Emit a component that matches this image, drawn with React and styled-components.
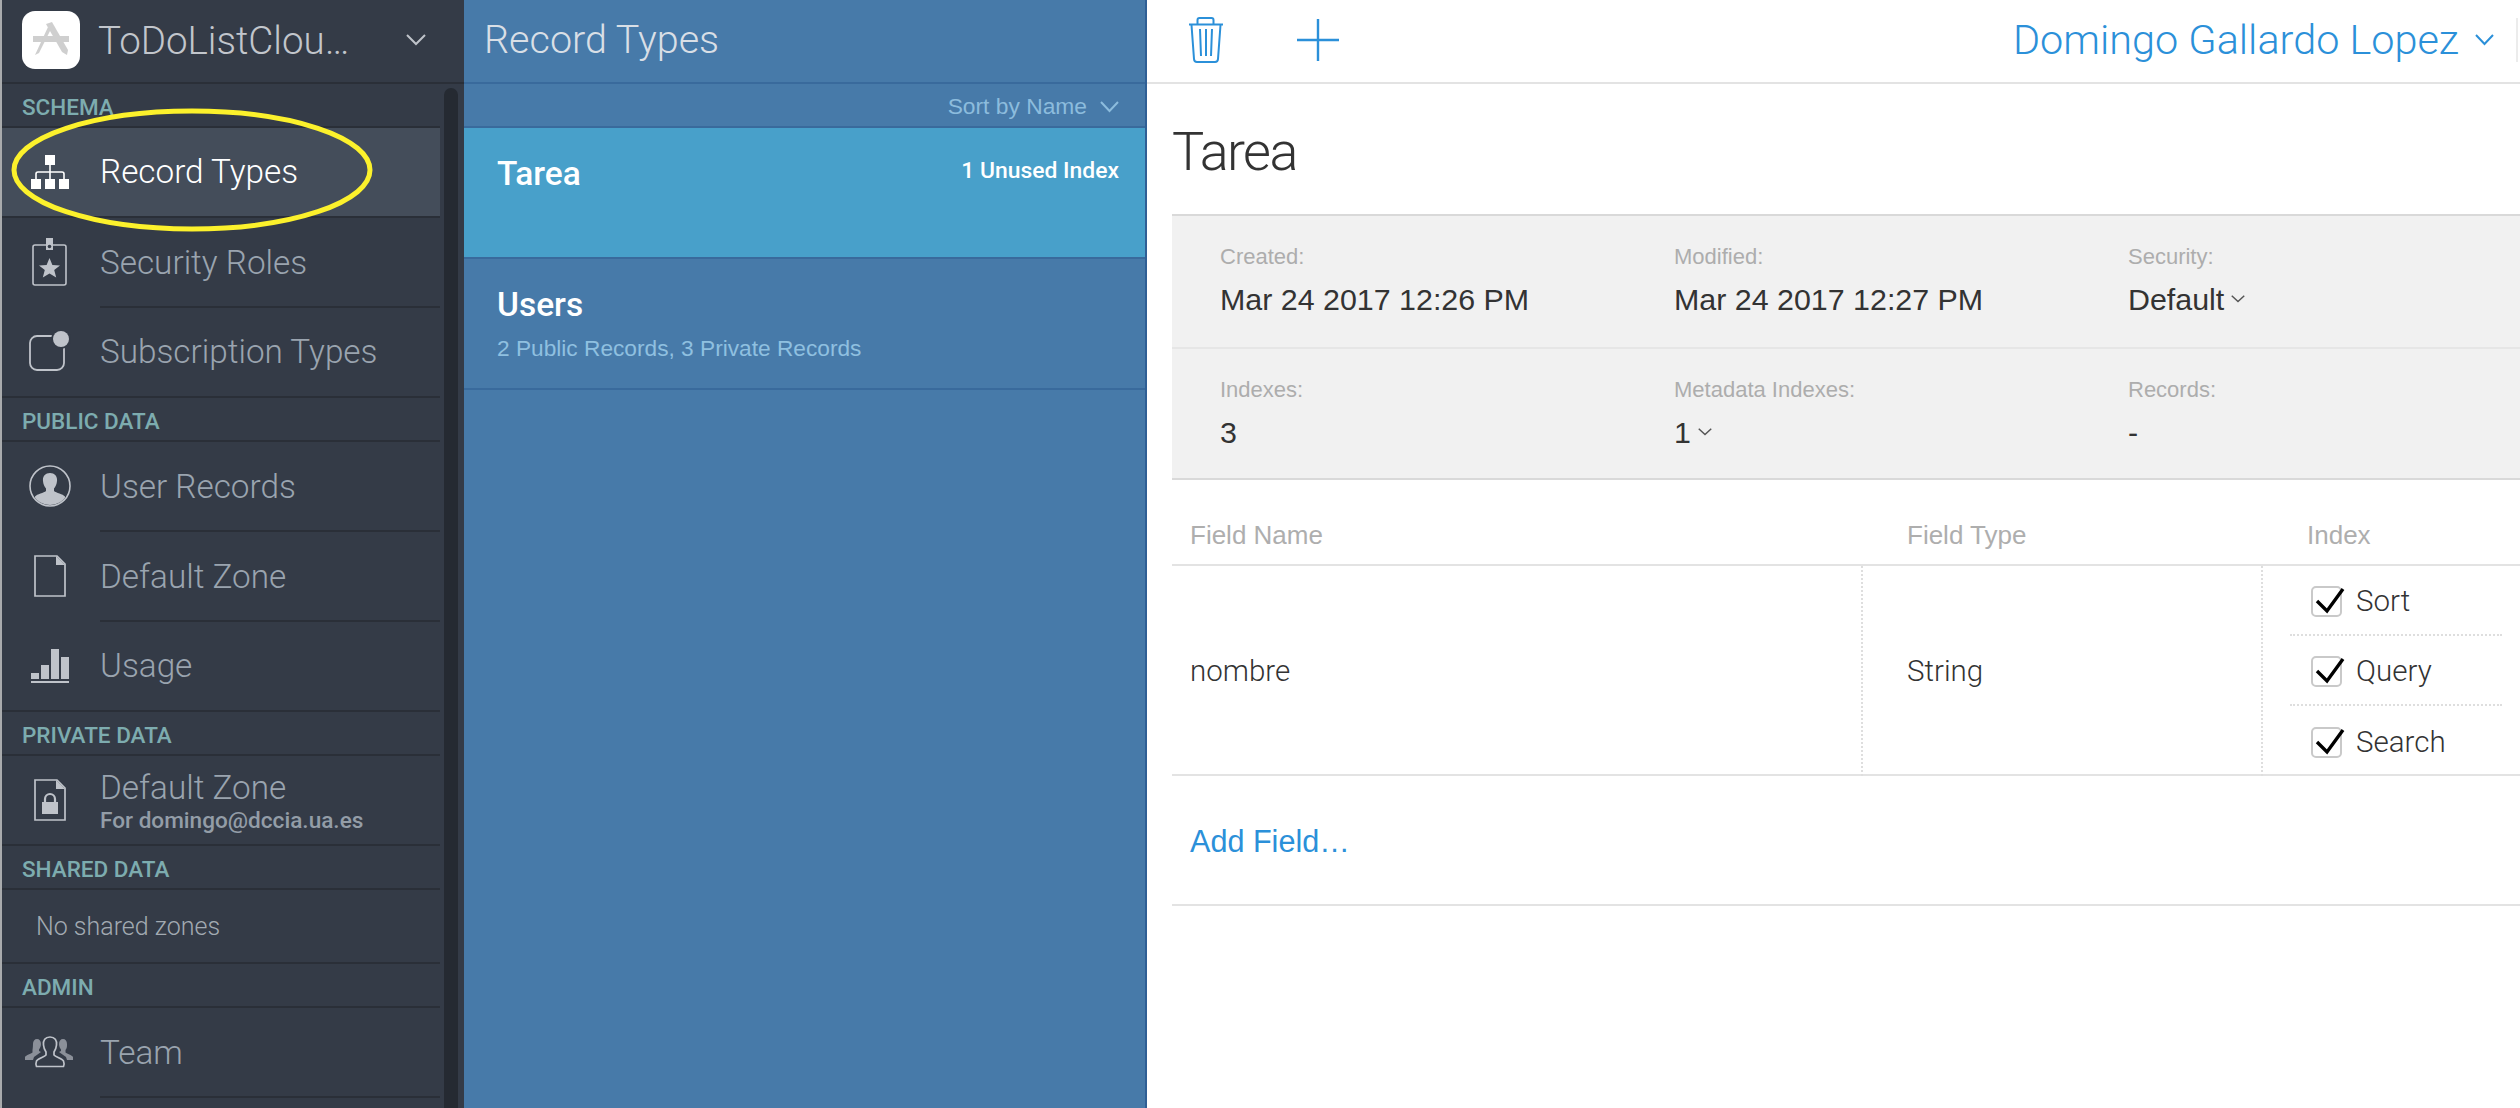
import React from "react";
import styled, { createGlobalStyle } from "styled-components";

const LIGHT = `Roboto, "Liberation Sans", sans-serif`;
const SANS = `"Liberation Sans", Arial, sans-serif`;

const GlobalStyle = createGlobalStyle`
  html, body {
    margin: 0;
    padding: 0;
    background: #fff;
    overflow: hidden;
  }
  * {
    box-sizing: border-box;
  }
`;

const Page = styled.div`
  display: flex;
  width: 2520px;
  height: 1108px;
  overflow: hidden;
  border-left: 2px solid #a9abad;
  font-family: ${SANS};
`;

/* ---------- left sidebar ---------- */

const Sidebar = styled.aside`
  position: relative;
  flex: 0 0 462px;
  display: flex;
  flex-direction: column;
  background: #343b47;
`;

const AppHeader = styled.header`
  flex: 0 0 84px;
  display: flex;
  align-items: center;
  padding: 0 38px 2px 20px;
  border-bottom: 2px solid #2a2f38;
`;

const AppIcon = styled.div`
  flex: 0 0 58px;
  height: 58px;
  margin-right: 18px;
  border-radius: 13px;
  background: #fff;
  svg {
    display: block;
  }
`;

const AppName = styled.div`
  flex: 1;
  font: 300 38.5px ${LIGHT};
  color: #c2c6cc;
  white-space: nowrap;
`;

const SideBody = styled.div`
  flex: 1;
  display: flex;
  min-height: 0;
  padding-right: 6px;
`;

const Nav = styled.nav`
  flex: 0 0 438px;
`;

const Track = styled.div`
  flex: 0 0 14px;
  margin: 4px 0 0 4px;
  border-radius: 7px 7px 0 0;
  background: #252a32;
`;

const SectionLabel = styled.div`
  height: 44px;
  padding: 10px 0 0 20px;
  border-bottom: 2px solid #2a2f38;
  font: 500 22.5px/26px ${LIGHT};
  color: #7dacaf;
`;

const Row = styled.div`
  display: flex;
  height: 90px;
  background: ${(p) => (p.$active ? "#444d5a" : "transparent")};
  border-bottom: 2px solid ${(p) => (p.$last ? "#2a2f38" : "transparent")};
`;

const IconSlot = styled.div`
  flex: 0 0 98px;
  display: flex;
  align-items: center;
  justify-content: center;
  padding-right: 2px;
  svg {
    display: block;
  }
`;

const RowText = styled.div`
  flex: 1;
  display: flex;
  flex-direction: column;
  justify-content: center;
  padding-top: 2px;
  margin-bottom: ${(p) => (p.$last ? "0" : "-2px")};
  border-bottom: 2px solid ${(p) => (p.$last ? "transparent" : "#2a2f38")};
`;

const RowTitle = styled.div`
  font: 300 33.3px/40px ${LIGHT};
  color: ${(p) => (p.$active ? "#fff" : "#9aa4af")};
`;

const RowSub = styled.div`
  font: 500 22.6px/24px ${LIGHT};
  color: #939da7;
  margin-top: 1px;
`;

const EmptyRow = styled.div`
  height: 74px;
  display: flex;
  align-items: center;
  padding: 0 0 0 34px;
  border-bottom: 2px solid #2a2f38;
  font: 300 25px ${LIGHT};
  color: #a2aab2;
`;

const Highlight = styled.svg`
  position: absolute;
  left: 7px;
  top: 106px;
  pointer-events: none;
`;

/* ---------- record types list ---------- */

const ListPanel = styled.section`
  flex: 0 0 683px;
  display: flex;
  flex-direction: column;
  background: #477aa9;
  border-right: 2px solid #2f5f95;
`;

const PanelHeader = styled.header`
  flex: 0 0 84px;
  display: flex;
  align-items: center;
  padding: 0 0 4px 20px;
  border-bottom: 2px solid #396a9c;
  font: 300 39.5px ${LIGHT};
  color: #d9dfe6;
`;

const SortBar = styled.div`
  flex: 0 0 44px;
  display: flex;
  align-items: center;
  justify-content: flex-end;
  gap: 13px;
  padding: 3px 26px 0 0;
  border-bottom: 2px solid #396a9c;
  font-size: 22.8px;
  color: #8cbcdd;
`;

const Item = styled.div`
  position: relative;
  height: 131px;
  padding: 29px 26px 0 33px;
  background: ${(p) => (p.$active ? "#48a0ca" : "transparent")};
  border-bottom: 2px solid #396a9c;
`;

const ItemHead = styled.div`
  display: flex;
  align-items: flex-start;
  justify-content: space-between;
`;

const ItemName = styled.div`
  font: 500 33.5px/34px ${LIGHT};
  color: #fff;
`;

const ItemNote = styled.div`
  font: 500 22.9px/28px ${LIGHT};
  color: #fff;
`;

const ItemSub = styled.div`
  margin-top: 13px;
  font-size: 22.7px;
  line-height: 26px;
  color: #8fc0e0;
`;

/* ---------- detail ---------- */

const Detail = styled.main`
  flex: 1;
  min-width: 0;
  display: flex;
  flex-direction: column;
  background: #fff;
`;

const TopBar = styled.header`
  flex: 0 0 84px;
  display: flex;
  align-items: center;
  padding: 0 2px 2px 42px;
  border-bottom: 2px solid #e3e3e3;
  svg {
    display: block;
  }
`;

const TopActions = styled.div`
  flex: 1;
  display: flex;
  align-items: center;
  gap: 74px;
`;

const UserMenu = styled.div`
  display: flex;
  align-items: center;
  gap: 16px;
  font: 300 41.4px ${LIGHT};
  color: #2b90d9;
`;

const TopDivider = styled.div`
  width: 2px;
  height: 44px;
  margin-left: 22px;
  background: #ececec;
`;

const Body = styled.div`
  padding-left: 25px;
`;

const Title = styled.h1`
  margin: 0;
  height: 130px;
  padding-top: 36px;
  font: 300 54px/64px ${LIGHT};
  letter-spacing: -1.6px;
  color: #333;
`;

const InfoPanel = styled.div`
  background: #f1f1f1;
  border-top: 2px solid #d9d9d9;
  border-bottom: 2px solid #d9d9d9;
`;

const InfoRow = styled.div`
  display: grid;
  grid-template-columns: 454px 454px 1fr;
  height: 131px;
  padding: 26px 0 0 48px;
  border-top: ${(p) => (p.$second ? "2px solid #e6e6e6" : "0")};
`;

const InfoLabel = styled.div`
  font-size: 22px;
  line-height: 30px;
  color: #adadad;
`;

const InfoValue = styled.div`
  display: flex;
  align-items: center;
  gap: 7px;
  margin-top: 10px;
  font-size: 30.4px;
  line-height: 34px;
  color: #333;
`;

const Table = styled.div`
  margin-top: 36px;
`;

const FieldGrid = styled.div`
  display: grid;
  grid-template-columns: 691px 400px 1fr;
`;

const HeadRow = styled(FieldGrid)`
  height: 50px;
  border-bottom: 2px solid #e3e3e3;
`;

const HeadCell = styled.div`
  padding: 3px 0 0 ${(p) => p.$pad || 18}px;
  font-size: 26px;
  line-height: 32px;
  color: #aeaeae;
`;

const BodyRow = styled(FieldGrid)`
  height: 210px;
  border-bottom: 2px solid #e3e3e3;
`;

const Cell = styled.div`
  display: flex;
  align-items: center;
  padding: 0 0 0 ${(p) => p.$pad || 18}px;
  font: 300 29.5px ${LIGHT};
  color: #333;
  border-right: ${(p) => (p.$divider ? "2px dotted #dedede" : "0")};
`;

const IndexList = styled.div`
  display: flex;
  flex-direction: column;
  padding: 0 18px 0 27px;
`;

const IndexOption = styled.label`
  display: flex;
  align-items: center;
  height: 70px;
  padding: 2px 0 0 21px;
  gap: 14px;
  font: 300 29.5px ${LIGHT};
  color: #333;
  border-bottom: ${(p) => (p.$last ? "0" : "2px dotted #dedede")};
`;

const CheckBox = styled.span`
  position: relative;
  flex: 0 0 31px;
  height: 31px;
  border: 2px solid #c9c9c9;
  border-radius: 5px;
  svg {
    position: absolute;
    left: 3px;
    top: 0;
    overflow: visible;
  }
`;

const FooterRow = styled.div`
  height: 130px;
  display: flex;
  align-items: center;
  padding: 2px 0 0 18px;
  border-bottom: 2px solid #e3e3e3;
  font-size: 30.6px;
  color: #2b90d9;
`;

/* ---------- drawings ---------- */

const Chevron = ({ w, h, color, sw = 2 }) => (
  <svg width={w} height={h} viewBox={`0 0 ${w} ${h}`} style={{ flex: "none" }}>
    <polyline
      points={`${sw / 2},${sw / 2} ${w / 2},${h - sw} ${w - sw / 2},${sw / 2}`}
      fill="none"
      stroke={color}
      strokeWidth={sw}
    />
  </svg>
);

const AppGlyph = () => (
  <svg width="58" height="58" viewBox="0 0 58 58">
    <g fill="#cfcfcf">
      <rect x="11" y="25" width="36" height="6" />
      <polygon points="26,16 29,18 17,42 13,44" />
      <polygon points="24,13 30,11 46,39 45,44 40,41" />
    </g>
  </svg>
);

const HierarchyIcon = () => (
  <svg width="38" height="34" viewBox="0 0 38 34" fill="#fff">
    <rect x="14" y="0" width="10" height="10" />
    <rect x="0" y="24" width="10" height="10" />
    <rect x="14" y="24" width="10" height="10" />
    <rect x="28" y="24" width="10" height="10" />
    <path d="M19 10v14M5 24v-5q0-2 2-2h24q2 0 2 2v5" fill="none" stroke="#fff" strokeWidth="1.6" />
  </svg>
);

const BadgeIcon = () => (
  <svg width="36" height="48" viewBox="0 0 36 48" fill="none" stroke="#bfc3ca">
    <rect x="1" y="7" width="33" height="40" rx="2" strokeWidth="1.6" />
    <rect x="14" y="0" width="7" height="12" fill="#bfc3ca" stroke="none" />
    <circle cx="17.5" cy="8.5" r="1.8" fill="#343b47" stroke="none" />
    <polygon
      points="17.5,20 20.4,27 28,27.4 22.2,32 24.2,39.5 17.5,35.4 10.8,39.5 12.8,32 7,27.4 14.6,27"
      fill="#bfc3ca"
      stroke="none"
    />
  </svg>
);

const SubscriptionIcon = () => (
  <svg width="42" height="42" viewBox="0 0 42 42" fill="none">
    <rect x="1" y="5" width="34" height="34" rx="7" stroke="#bfc3ca" strokeWidth="1.8" />
    <circle cx="32" cy="8" r="10" fill="#343b47" />
    <circle cx="32" cy="8" r="8" fill="#bfc3ca" />
  </svg>
);

const UserIcon = () => (
  <svg width="42" height="42" viewBox="0 0 42 42">
    <defs>
      <clipPath id="userClip">
        <circle cx="21" cy="21" r="19" />
      </clipPath>
    </defs>
    <circle cx="21" cy="21" r="20" fill="none" stroke="#bfc3ca" strokeWidth="1.6" />
    <path
      clipPath="url(#userClip)"
      d="M21 8c5 0 7.500 3.500 7 8-.2 3-1.500 5.500-3 7.500v2.500c2 2 9 3 11 5.500v12H6V31.500c2-2.500 9-3.500 11-5.500v-2.500c-1.500-2-2.800-4.500-3-7.500-.5-4.500 2-8 7-8z"
      fill="#bfc3ca"
    />
  </svg>
);

const DocIcon = ({ lock }) => (
  <svg width="32" height="42" viewBox="0 0 32 42">
    <path d="M1 1H23L31 9V41H1Z" fill="none" stroke="#bfc3ca" strokeWidth="1.7" />
    <path d="M22 1L31 10H22Z" fill="#bfc3ca" />
    {lock && (
      <g>
        <rect x="8" y="23" width="16" height="12" fill="#bfc3ca" />
        <path d="M11 24v-4a5 5 0 0 1 10 0v4" fill="none" stroke="#bfc3ca" strokeWidth="2.200" />
      </g>
    )}
  </svg>
);

const UsageIcon = () => (
  <svg width="38" height="34" viewBox="0 0 38 34" fill="#bfc3ca">
    <rect x="0" y="24" width="8" height="6" />
    <rect x="10" y="16" width="8" height="14" />
    <rect x="20" y="0" width="8" height="30" />
    <rect x="30" y="8" width="8" height="22" />
    <rect x="0" y="32" width="38" height="2" />
  </svg>
);

const TeamIcon = () => (
  <svg width="50" height="32" viewBox="0 0 50 32">
    <g fill="#8b9099">
      <path d="M8 8c0-3 1.500-5 4-5s4 2 4 5c0 2-.8 4-2 5.500v1.500l2 1-7 5-1 3H0v-3c1-2 6-3 7.500-4.500v-2.500C7.800 12 8 10 8 8z" />
      <path d="M42 8c0-3-1.500-5-4-5s-4 2-4 5c0 2 .8 4 2 5.500v1.500l-2 1 7 5 1 3h6v-3c-1-2-6-3-7.500-4.500v-2.500C42.200 12 42 10 42 8z" />
    </g>
    <path
      d="M25 1c5 0 7 3.500 6.500 8-.2 3-1.200 5-2.500 7v3c2 2 8 3.500 9.500 6 .8 2 .8 3.500 0 5.500h-27c-.8-2-.8-3.500 0-5.500 1.500-2.500 7.500-4 9.500-6v-3c-1.300-2-2.300-4-2.500-7C18 4.500 20 1 25 1z"
      fill="#343b47"
      stroke="#bfc3ca"
      strokeWidth="1.700"
    />
  </svg>
);

const TrashIcon = () => (
  <svg width="34" height="46" viewBox="0 0 34 46" fill="none" stroke="#2b90d9" strokeWidth="2">
    <path d="M0 7.500H34" />
    <path d="M8.500 7V3q0-2 2-2h12q2 0 2 2v4" />
    <path d="M2.500 8L5 42q.2 3 3 3h18q2.800 0 3-3l2.500-34" />
    <path d="M11 12l1 27M17 12v27M23 12l-1 27" />
  </svg>
);

const PlusIcon = () => (
  <svg width="42" height="42" viewBox="0 0 42 42" stroke="#2b90d9" strokeWidth="2.400">
    <path d="M0 21H42M21 0V42" />
  </svg>
);

const CheckMark = () => (
  <svg width="28" height="26" viewBox="0 0 28 26">
    <polyline points="1,13 11,23 27,1" fill="none" stroke="#000" strokeWidth="3.400" />
  </svg>
);

const sections = [
  {
    label: "SCHEMA",
    rows: [
      { title: "Record Types", icon: <HierarchyIcon />, active: true },
      { title: "Security Roles", icon: <BadgeIcon /> },
      { title: "Subscription Types", icon: <SubscriptionIcon /> },
    ],
  },
  {
    label: "PUBLIC DATA",
    rows: [
      { title: "User Records", icon: <UserIcon /> },
      { title: "Default Zone", icon: <DocIcon /> },
      { title: "Usage", icon: <UsageIcon /> },
    ],
  },
  {
    label: "PRIVATE DATA",
    rows: [
      { title: "Default Zone", sub: "For domingo@dccia.ua.es", icon: <DocIcon lock /> },
    ],
  },
  { label: "SHARED DATA", empty: "No shared zones" },
  {
    label: "ADMIN",
    rows: [{ title: "Team", icon: <TeamIcon />, inset: true }],
  },
];

const info = [
  [
    { label: "Created:", value: "Mar 24 2017 12:26 PM" },
    { label: "Modified:", value: "Mar 24 2017 12:27 PM" },
    { label: "Security:", value: "Default", menu: true },
  ],
  [
    { label: "Indexes:", value: "3" },
    { label: "Metadata Indexes:", value: "1", menu: true },
    { label: "Records:", value: "-" },
  ],
];

const App = () => {
  return (
    <Page>
      <GlobalStyle />
      <Sidebar>
        <AppHeader>
          <AppIcon>
            <AppGlyph />
          </AppIcon>
          <AppName>ToDoListClou…</AppName>
          <Chevron w={20} h={12} color="#bfc3ca" />
        </AppHeader>
        <SideBody>
          <Nav>
            {sections.map((section) => (
              <div key={section.label}>
                <SectionLabel>{section.label}</SectionLabel>
                {section.empty && <EmptyRow>{section.empty}</EmptyRow>}
                {section.rows &&
                  section.rows.map((row, i) => {
                    const last =
                      (i === section.rows.length - 1 && !row.inset) || row.active;
                    return (
                      <Row key={row.title} $active={row.active} $last={last}>
                        <IconSlot>{row.icon}</IconSlot>
                        <RowText $last={last}>
                          <RowTitle $active={row.active}>{row.title}</RowTitle>
                          {row.sub && <RowSub>{row.sub}</RowSub>}
                        </RowText>
                      </Row>
                    );
                  })}
              </div>
            ))}
          </Nav>
          <Track />
        </SideBody>
        <Highlight width="366" height="128" viewBox="0 0 366 128">
          <ellipse cx="183" cy="64" rx="178" ry="59" fill="none" stroke="#fcf12c" strokeWidth="5" />
        </Highlight>
      </Sidebar>

      <ListPanel>
        <PanelHeader>Record Types</PanelHeader>
        <SortBar>
          Sort by Name
          <Chevron w={19} h={12} color="#8cbcdd" />
        </SortBar>
        <Item $active>
          <ItemHead>
            <ItemName>Tarea</ItemName>
            <ItemNote>1 Unused Index</ItemNote>
          </ItemHead>
        </Item>
        <Item>
          <ItemHead>
            <ItemName>Users</ItemName>
          </ItemHead>
          <ItemSub>2 Public Records, 3 Private Records</ItemSub>
        </Item>
      </ListPanel>

      <Detail>
        <TopBar>
          <TopActions>
            <TrashIcon />
            <PlusIcon />
          </TopActions>
          <UserMenu>
            Domingo Gallardo Lopez
            <Chevron w={19} h={12} color="#2b90d9" />
          </UserMenu>
          <TopDivider />
        </TopBar>
        <Body>
          <Title>Tarea</Title>
          <InfoPanel>
            {info.map((cols, r) => (
              <InfoRow key={r} $second={r === 1}>
                {cols.map((col) => (
                  <div key={col.label}>
                    <InfoLabel>{col.label}</InfoLabel>
                    <InfoValue>
                      {col.value}
                      {col.menu && <Chevron w={14} h={8} color="#555" sw={1.5} />}
                    </InfoValue>
                  </div>
                ))}
              </InfoRow>
            ))}
          </InfoPanel>
          <Table>
            <HeadRow>
              <HeadCell>Field Name</HeadCell>
              <HeadCell $pad={44}>Field Type</HeadCell>
              <HeadCell $pad={44}>Index</HeadCell>
            </HeadRow>
            <BodyRow>
              <Cell $divider>nombre</Cell>
              <Cell $divider $pad={44}>String</Cell>
              <IndexList>
                {["Sort", "Query", "Search"].map((name, i) => (
                  <IndexOption key={name} $last={i === 2}>
                    <CheckBox>
                      <CheckMark />
                    </CheckBox>
                    {name}
                  </IndexOption>
                ))}
              </IndexList>
            </BodyRow>
            <FooterRow>Add Field…</FooterRow>
          </Table>
        </Body>
      </Detail>
    </Page>
  );
};

export default App;
